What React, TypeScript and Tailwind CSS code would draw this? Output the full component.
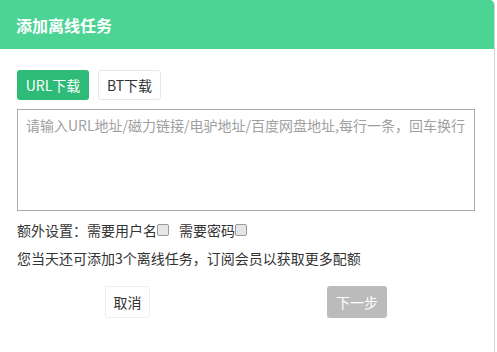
export default function App() {
  const font = { fontFamily: '"Noto Sans CJK SC", "Liberation Sans", sans-serif' };
  return (
    <div className="w-[497px] h-[352px] bg-white" style={font}>
      <div className="w-[495px] h-[352px] border-r border-[#d4d4d4] rounded-tr-[5px] bg-white overflow-hidden">
        <header className="h-[49px] bg-[#4cd495] px-[16px] flex items-center">
          <h1 className="text-[16px] font-bold text-white">添加离线任务</h1>
        </header>

        <main className="pl-[17px] pt-[21px]">
          <div className="flex gap-[9px]">
            <button className="h-[30px] w-[72px] rounded-[3px] bg-[#2dbb77] text-white text-[14px] leading-none">
              URL下载
            </button>
            <button className="h-[30px] w-[63px] rounded-[3px] border border-[#e8e8e8] bg-white text-[#333] text-[14px] leading-none">
              BT下载
            </button>
          </div>

          <textarea
            className="mt-[9px] block w-[458px] h-[102px] border border-[#aaaaaa] px-[8px] py-[5px] text-[14px] leading-[20px] text-[#333] placeholder:text-[#a0a0a0] resize-none outline-none"
            placeholder="请输入URL地址/磁力链接/电驴地址/百度网盘地址,每行一条，回车换行"
          />

          <div className="mt-[9px] flex items-center h-[20px] text-[14px] text-[#333]">
            <span>额外设置：需要用户名</span>
            <span className="w-[12px] h-[12px] rounded-[2px] border border-[#9a9a9a] bg-[#e6e6e6]" />
            <span className="ml-[10px]">需要密码</span>
            <span className="w-[12px] h-[12px] rounded-[2px] border border-[#9a9a9a] bg-[#e6e6e6]" />
          </div>

          <p className="mt-[8px] h-[20px] leading-[20px] text-[14px] text-[#333]">
            您当天还可添加3个离线任务，订阅会员以获取更多配额
          </p>

          <div className="mt-[18px] flex items-center">
            <button className="ml-[88px] h-[32px] w-[45px] rounded-[3px] border border-[#eeeeee] bg-white text-[14px] text-[#333] leading-none">
              取消
            </button>
            <button className="ml-[177px] h-[32px] w-[60px] rounded-[3px] bg-[#bbbbbb] text-[14px] text-white leading-none">
              下一步
            </button>
          </div>
        </main>
      </div>
    </div>
  );
}
